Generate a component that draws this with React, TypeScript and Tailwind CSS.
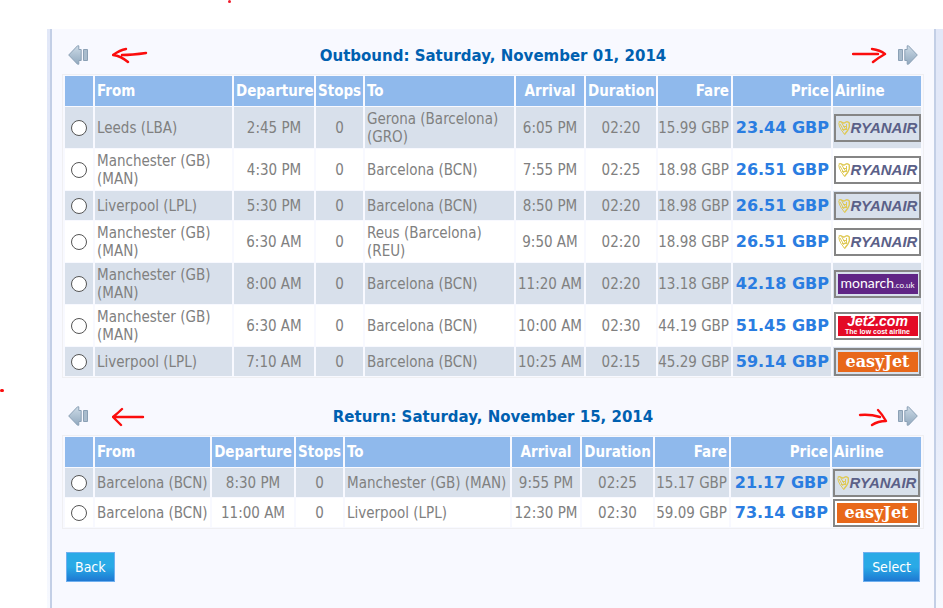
import { useState } from "react"

type Airline = "ryanair" | "monarch" | "jet2" | "easyjet"

type Flight = {
  from: string
  departure: string
  stops: number
  to: string
  arrival: string
  duration: string
  fare: string
  price: string
  airline: Airline
}

const outbound: Flight[] = [
  { from: "Leeds (LBA)", departure: "2:45 PM", stops: 0, to: "Gerona (Barcelona) (GRO)", arrival: "6:05 PM", duration: "02:20", fare: "15.99 GBP", price: "23.44 GBP", airline: "ryanair" },
  { from: "Manchester (GB) (MAN)", departure: "4:30 PM", stops: 0, to: "Barcelona (BCN)", arrival: "7:55 PM", duration: "02:25", fare: "18.98 GBP", price: "26.51 GBP", airline: "ryanair" },
  { from: "Liverpool (LPL)", departure: "5:30 PM", stops: 0, to: "Barcelona (BCN)", arrival: "8:50 PM", duration: "02:20", fare: "18.98 GBP", price: "26.51 GBP", airline: "ryanair" },
  { from: "Manchester (GB) (MAN)", departure: "6:30 AM", stops: 0, to: "Reus (Barcelona) (REU)", arrival: "9:50 AM", duration: "02:20", fare: "18.98 GBP", price: "26.51 GBP", airline: "ryanair" },
  { from: "Manchester (GB) (MAN)", departure: "8:00 AM", stops: 0, to: "Barcelona (BCN)", arrival: "11:20 AM", duration: "02:20", fare: "13.18 GBP", price: "42.18 GBP", airline: "monarch" },
  { from: "Manchester (GB) (MAN)", departure: "6:30 AM", stops: 0, to: "Barcelona (BCN)", arrival: "10:00 AM", duration: "02:30", fare: "44.19 GBP", price: "51.45 GBP", airline: "jet2" },
  { from: "Liverpool (LPL)", departure: "7:10 AM", stops: 0, to: "Barcelona (BCN)", arrival: "10:25 AM", duration: "02:15", fare: "45.29 GBP", price: "59.14 GBP", airline: "easyjet" },
]

const inbound: Flight[] = [
  { from: "Barcelona (BCN)", departure: "8:30 PM", stops: 0, to: "Manchester (GB) (MAN)", arrival: "9:55 PM", duration: "02:25", fare: "15.17 GBP", price: "21.17 GBP", airline: "ryanair" },
  { from: "Barcelona (BCN)", departure: "11:00 AM", stops: 0, to: "Liverpool (LPL)", arrival: "12:30 PM", duration: "02:30", fare: "59.09 GBP", price: "73.14 GBP", airline: "easyjet" },
]

// the empty entry is the "To" column, it takes whatever is left
const outboundCols = ["w-[28px]", "w-[137px]", "w-[80px]", "w-[47px]", "", "w-[68px]", "w-[70px]", "w-[73px]", "w-[98px]", "w-[88px]"]
const returnCols = ["w-[28px]", "w-[115px]", "w-[82px]", "w-[47px]", "", "w-[68px]", "w-[71px]", "w-[74px]", "w-[99px]", "w-[89px]"]

function StepIcon({ flip }: { flip?: boolean }) {
  return (
    <svg width="20" height="20" viewBox="0 0 20 20" className={flip ? "-scale-x-100" : ""} aria-hidden="true">
      <defs>
        <linearGradient id="step" x1="0" y1="0" x2="0" y2="1">
          <stop offset="0" stopColor="#ccdae6" />
          <stop offset="1" stopColor="#91a9bf" />
        </linearGradient>
      </defs>
      <path d="M.7 10 9.500.8h1.300v3.700h2.400v11h-2.400v3.700H9.500z" fill="url(#step)" stroke="#8ba0b5" />
      <path d="M15.500 4.500h4v11h-4z" fill="#a9bccd" stroke="#8ba0b5" />
    </svg>
  )
}

function Scribble({ lines }: { lines: string }) {
  return (
    <svg width="36" height="22" viewBox="0 0 36 22" fill="none" stroke="#fb0d0d" strokeWidth="2.4" strokeLinecap="round" strokeLinejoin="round" aria-hidden="true">
      <path d={lines} />
    </svg>
  )
}

function AirlineLogo({ airline }: { airline: Airline }) {
  return (
    <div className="ml-px flex h-7 w-[87px] items-center justify-center border-2 border-[#858585] whitespace-nowrap">
      {airline === "ryanair" && (
        <div className="flex h-5 w-20 items-center gap-px">
          <svg width="12" height="16" viewBox="0 0 12 16" fill="none" stroke="#dfc955" className="shrink-0" aria-hidden="true">
            <path d="M.7 2.500Q2.500.8 4 2.500 6 3.500 7.500 2.200 9.500.8 11.300 3V7Q10 11 6.500 14.500" strokeWidth="1.4" />
            <path d="M.8 3Q.8 6 3 9.500 5 12 6.500 14.500M2 4 6 11M4 3.500 7.500 9M8.500 4v6M4 9.500h4M5 6.500h4" />
          </svg>
          <span className="font-['Liberation_Sans',sans-serif] text-[15px] leading-5 font-bold text-[#5b6088] italic">RYANAIR</span>
        </div>
      )}
      {airline === "monarch" && (
        <div className="flex h-5 w-20 items-baseline justify-center bg-[#602585] text-white">
          <span className="font-['Lato',sans-serif] text-[14px] leading-[18px]">monarch</span>
          <span className="font-['Lato',sans-serif] text-[8px] leading-[18px]">.co.uk</span>
        </div>
      )}
      {airline === "jet2" && (
        <div className="flex h-5 w-20 flex-col items-center bg-[#e40a26] font-['Liberation_Sans',sans-serif] font-bold text-white">
          <span className="text-[14px] leading-[11px] italic">Jet2.com</span>
          <span className="text-[7px] leading-[9px]">The low cost airline</span>
        </div>
      )}
      {airline === "easyjet" && (
        <div className="flex h-5 w-20 items-center justify-center bg-[#e8681a] text-white">
          <span className="font-['DejaVu_Serif',serif] text-[16px] leading-5 font-bold">easyJet</span>
        </div>
      )}
    </div>
  )
}

type FlightTableProps = {
  name: string
  title: string
  flights: Flight[]
  cols: string[]
  leftMark: string
  rightMark: string
}

function FlightTable({ name, title, flights, cols, leftMark, rightMark }: FlightTableProps) {
  const [selected, setSelected] = useState<number | null>(null)

  return (
    <section>
      <div className="grid h-[38px] grid-cols-[1fr_auto_1fr] items-center px-[6px]">
        <div className="flex items-center gap-6">
          <button type="button" aria-label="Previous day">
            <StepIcon />
          </button>
          <Scribble lines={leftMark} />
        </div>
        <h2 className="pt-[2px] font-['DejaVu_Sans',sans-serif] text-[15px] leading-5 font-bold text-[#0060b0]">{title}</h2>
        <div className="flex items-center justify-end gap-[10px]">
          <Scribble lines={rightMark} />
          <button type="button" aria-label="Next day">
            <StepIcon flip />
          </button>
        </div>
      </div>

      <table className="w-full table-fixed border-separate border-spacing-x-[2px] border-spacing-y-px border border-[#efeff2] text-[15px] leading-[18px] text-[#808080]">
        <colgroup>
          {cols.map((width, i) => (
            <col key={i} className={width} />
          ))}
        </colgroup>
        <thead>
          <tr className="h-[30px] text-white *:bg-[#8fb9ec] *:px-[2px]">
            <th aria-label="Choose" />
            <th className="text-left">From</th>
            <th>Departure</th>
            <th>Stops</th>
            <th className="text-left">To</th>
            <th>Arrival</th>
            <th>Duration</th>
            <th className="text-right">Fare</th>
            <th className="text-right">Price</th>
            <th className="text-left">Airline</th>
          </tr>
        </thead>
        <tbody>
          {flights.map((f, i) => (
            <tr key={i} className="h-[29px] odd:*:bg-[#d8e0eb] even:*:bg-white">
              <td className="p-0">
                <input
                  type="radio"
                  name={name}
                  aria-label={`${f.from} ${f.departure}`}
                  checked={selected === i}
                  onChange={() => setSelected(i)}
                  className="mx-auto block size-4 appearance-none rounded-full border border-[#555] bg-white checked:border-4"
                />
              </td>
              <td className="py-0 pr-0 pl-[2px]">{f.from}</td>
              <td className="p-0 text-center">{f.departure}</td>
              <td className="p-0 text-center">{f.stops}</td>
              <td className="py-0 pr-0 pl-[2px]">{f.to}</td>
              <td className="p-0 text-center whitespace-nowrap">{f.arrival}</td>
              <td className="p-0 text-center">{f.duration}</td>
              <td className="py-0 pr-[2px] pl-0 text-right whitespace-nowrap">{f.fare}</td>
              <td className="py-0 pr-[2px] pl-0 text-right font-['DejaVu_Sans',sans-serif] text-[16px] font-bold whitespace-nowrap text-[#2a7de1]">{f.price}</td>
              <td className={f.from.length + f.to.length > 30 && name === "outbound" ? "h-[41px] p-0" : "p-0"}>
                <AirlineLogo airline={f.airline} />
              </td>
            </tr>
          ))}
        </tbody>
      </table>
    </section>
  )
}

export default function App() {
  return (
    <div className="relative min-h-screen bg-white pt-[29px] pl-[47px] font-['DejaVu_Sans_Condensed','DejaVu_Sans',sans-serif]">
      {/* stray pen marks */}
      <span className="absolute top-0 left-[228px] size-[3px] rounded-full bg-[#f01c2c]" />
      <span className="absolute top-[389px] left-0 h-[3px] w-1 rounded-full bg-[#fb0d0d]" />

      <div className="bg-linear-to-b from-[#e2e8f8] from-60% to-[#f8faff] pr-[7px] pl-[3px]">
        <main className="rounded-b-lg border-x-2 border-[#c3cfe6] bg-[#f8f9ff] pt-[7px] pr-[10px] pb-[35px] pl-[10px]">
          <FlightTable
            name="outbound"
            title="Outbound: Saturday, November 01, 2014"
            flights={outbound}
            cols={outboundCols}
            leftMark="M14 5Q8 6 1 11Q9 12 16 18M10 11Q20 11 34 9"
            rightMark="M1 10H26M20 5Q28 6 33 10Q26 14 21 18"
          />
          <div className="h-[19px]" />
          <FlightTable
            name="return"
            title="Return: Saturday, November 15, 2014"
            flights={inbound}
            cols={returnCols}
            leftMark="M10 4Q6 8 1 12Q5 16 9 20M3 12H31"
            rightMark="M8 10Q18 9 28 12M26 5Q30 9 34 16Q26 16 20 20"
          />
          <div className="mt-[23px] flex justify-between px-1 text-[14px] text-white">
            <button type="button" className="h-[30px] border border-[#6fb0f0] bg-linear-to-b from-[#2aaae6] from-50% to-[#1f78d2] px-2">
              Back
            </button>
            <button type="button" className="h-[30px] border border-[#6fb0f0] bg-linear-to-b from-[#2aaae6] from-50% to-[#1f78d2] px-2">
              Select
            </button>
          </div>
        </main>
      </div>
    </div>
  )
}
